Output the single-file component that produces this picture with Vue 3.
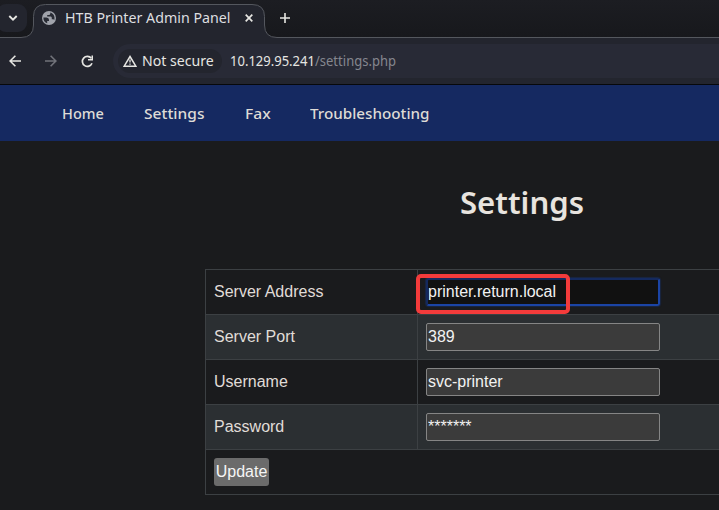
<script setup>
import { ref } from 'vue'

const links = [
  { label: 'Home', kind: 'home' },
  { label: 'Settings', kind: 'settings' },
  { label: 'Fax', kind: 'fax' },
  { label: 'Troubleshooting', kind: 'trouble' },
]
const fields = ref([
  { label: 'Server Address', value: 'printer.return.local', active: true },
  { label: 'Server Port', value: '389' },
  { label: 'Username', value: 'svc-printer' },
  { label: 'Password', value: '*******' },
])
</script>

<template>
  <div class="window">
    <header class="tabstrip">
      <svg class="tab-shape" width="719" height="38" viewBox="0 0 719 38">
        <path d="M0 38V37.500H21Q33.500 37.500 33.500 25V16.500Q33.500 4.500 45.500 4.500H252Q264.500 4.500 264.500 16.500V25Q264.500 37.500 277 37.500H719V38Z" fill="#23252e" />
        <path d="M0 37.500H21Q33.500 37.500 33.500 25V16.500Q33.500 4.500 45.500 4.500H252Q264.500 4.500 264.500 16.500V25Q264.500 37.500 277 37.500H719" fill="none" stroke="#54575e" />
      </svg>
      <button class="tab-search" aria-label="Search tabs">
        <svg width="10" height="8" viewBox="0 0 10 8"><path d="M1.300 2 5 5.700 8.700 2" fill="none" stroke="#e6e6e2" stroke-width="1.900" /></svg>
      </button>
      <div class="tab">
        <svg class="globe" width="14" height="14" viewBox="0 0 14 14">
          <circle cx="7" cy="7" r="7" fill="#a0a3ab" />
          <path d="M1.400 6.500H4.500Q7 6.700 7 8.800V10H5.200V12.300C2.800 11.700 1.200 9.500 1.400 6.500ZM8.300 1.600V2.500Q8.300 4 6.600 4H5.200V5.500H8.800Q9.800 5.600 9.800 7V8.200H11Q12 8.300 12.200 9.300C13.300 6.200 11.900 2.600 8.300 1.600Z" fill="#282b34" />
        </svg>
        <span class="tab-title">HTB Printer Admin Panel</span>
        <svg class="close" width="8" height="8" viewBox="0 0 8 8"><path d="m.7.7 6.600 6.600M7.300.7.7 7.300" stroke="#e6e6e2" stroke-width="1.700" /></svg>
      </div>
      <svg class="plus" width="10" height="10" viewBox="0 0 10 10"><path d="M5 0V10M0 5H10" stroke="#e6e6e2" stroke-width="1.600" /></svg>
    </header>

    <div class="toolbar">
      <svg class="nav-icon" width="12" height="12" viewBox="0 0 12 12"><path d="M12 6H1.200M6.400.7 1.100 6l5.300 5.300" fill="none" stroke="#e6e6e2" stroke-width="1.600" /></svg>
      <svg class="nav-icon" width="12" height="12" viewBox="0 0 12 12"><path d="M0 6H10.800M5.600.7 10.900 6l-5.300 5.300" fill="none" stroke="#71737a" stroke-width="1.600" /></svg>
      <svg class="reload" width="13" height="13" viewBox="0 0 13 13"><path d="M10.300 3.300A5 5 0 1 0 11 8.300" fill="none" stroke="#e6e6e2" stroke-width="1.700" /><path d="M12 .5V5.500H7V4h3.500V.5Z" fill="#e6e6e2" /></svg>
      <div class="omnibox">
        <div class="chip">
          <svg width="14" height="12" viewBox="0 0 14 12"><path d="M7 1.500 12.800 11.200H1.200Z" fill="none" stroke="#e6e6e2" stroke-width="1.500" /><path d="M7 4.500V7.600M7 8.500V9.800" stroke="#e6e6e2" stroke-width="1.300" /></svg>
          <span>Not secure</span>
        </div>
        <div class="url">10.129.95.241<span>/settings.php</span></div>
      </div>
    </div>

    <nav class="site-nav">
      <a v-for="link in links" :key="link.label" :class="link.kind"><span>{{ link.label }}</span></a>
    </nav>

    <main>
      <h1><span>Settings</span></h1>
      <form class="grid" @submit.prevent>
        <div v-for="field in fields" :key="field.label" class="row">
          <label class="name">{{ field.label }}</label>
          <div class="cell">
            <input v-model="field.value" type="text" :class="{ active: field.active }" />
            <div v-if="field.active" class="marker"></div>
          </div>
        </div>
        <div class="row"><button class="update">Update</button></div>
      </form>
    </main>
  </div>
</template>

<style>
body { margin: 0; background: #1a1b1d; overflow: hidden; }
</style>

<style scoped>
* { box-sizing: border-box; }
.window { width: 719px; height: 510px; overflow: hidden; background: #1a1b1d; color: #e0ddd8; }
.tabstrip { position: relative; height: 38px; display: flex; background: linear-gradient(#1c1d22, #17181c); font-family: "Noto Sans", sans-serif; }
.tab-shape { position: absolute; left: 0; top: 0; }
.tab-search { position: relative; width: 30px; height: 28px; margin: 4px 0 0 -3px; padding: 0; border: 0; border-radius: 9px; background: #23252e; display: flex; align-items: center; justify-content: center; }
.tab-search svg { margin-left: 2px; }
.tab { position: relative; width: 237px; height: 28px; margin-top: 4px; padding-left: 15px; display: flex; align-items: center; }
.globe { flex: none; }
.tab-title { width: 165px; margin-left: 9px; font-size: 14.670px; line-height: 26px; white-space: nowrap; color: #dedfe0; transform: translateY(-1px) scaleX(.971); transform-origin: left center; }
.close { margin-left: 15px; flex: none; }
.plus { position: relative; margin: 13px 0 0 16px; }
.toolbar { height: 47px; border-bottom: 1px solid #07080a; background: #23252e; display: flex; align-items: center; padding-left: 9px; font-family: "Noto Sans", sans-serif; }
.nav-icon { margin-right: 24px; flex: none; }
.reload { flex: none; margin-right: 19px; }
.omnibox { flex: 1; height: 34px; background: #282a36; border-radius: 17px 0 0 17px; padding-left: 5px; display: flex; align-items: center; }
.chip { width: 104px; height: 24px; border-radius: 12px; background: #23252e; display: flex; align-items: center; gap: 5px; padding-left: 5px; color: #e6e6e2; font-size: 14.400px; line-height: 24px; white-space: nowrap; }
.chip span { transform: scaleX(.98); transform-origin: left center; }
.chip svg { flex: none; }
.url { margin-left: 8px; font-size: 14px; line-height: 20px; color: #e6e6e2; white-space: nowrap; transform: scaleX(.93); transform-origin: left center; }
.url span { color: #85878f; }
.site-nav { height: 56px; background: #152961; display: flex; padding-left: 62px; gap: 40px; font: 500 15px/56px "Noto Sans", sans-serif; }
.site-nav a { color: #dedbd6; white-space: nowrap; }
.site-nav span, h1 span { display: inline-block; transform-origin: left center; }
.home { width: 42px; }
.home span { transform: scaleX(.97); }
.settings { width: 60.500px; }
.settings span { transform: scaleX(1.035); }
.fax { width: 25.500px; }
.fax span { transform: scaleX(1.040); }
.trouble { width: 120px; }
.trouble span { transform: scaleX(1.015); }
h1 { width: 124px; height: 40px; margin: 41px 0 47px 460px; font: 600 30.500px/40px "Noto Sans", sans-serif; color: #e8e4df; white-space: nowrap; }
h1 span { transform: scaleX(1.020); }
.grid { margin-left: 205px; width: 634px; border: 1px solid #3c4043; border-bottom: 0; font: 16px/44px "Liberation Sans", Arial, sans-serif; }
.row { display: flex; height: 45px; border-bottom: 1px solid #3c4043; }
.row:nth-child(even) { background: #2b2f32; }
.name { width: 212px; padding-left: 8px; border-right: 1px solid #3c4043; }
.cell { position: relative; padding: 8px; display: flex; }
input { width: 234px; height: 28px; padding: 0 1px; border: 1px solid #858585; border-radius: 2px; background: #3b3b3b; color: #f2f2f2; font: inherit; line-height: 24px; outline: 0; }
input.active { border: 2px solid #1b44a5; border-top-color: #14295e; border-left-color: #14295e; padding: 0; border-radius: 3px; background: #111; box-shadow: 0 0 1px 1px #18316a80; }
.marker { position: absolute; left: -2px; top: 4px; width: 154px; height: 40px; border: 4px solid #f33b3b; border-radius: 5px; }
.update { width: 55px; height: 28px; margin: 8px; padding: 0; border: 0; border-radius: 3px; background: #6b6b6b; color: #f5f5f5; font: inherit; line-height: 28px; }
</style>
